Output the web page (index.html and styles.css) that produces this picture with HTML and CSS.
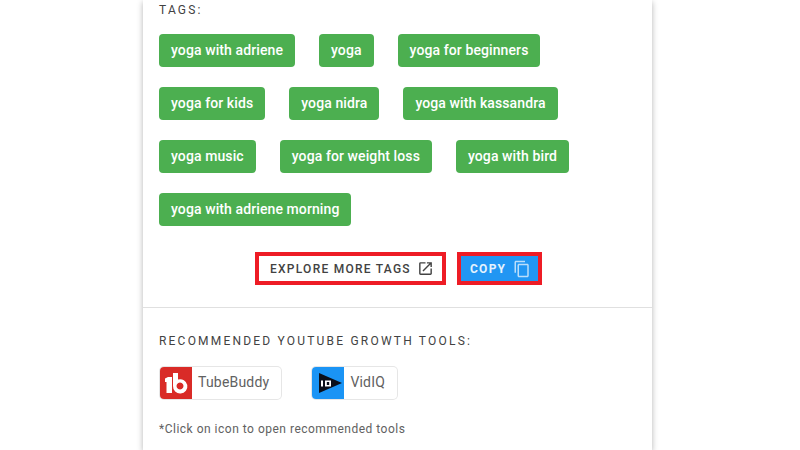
FILE: index.html
```html
<!DOCTYPE html>
<html lang="en">
<head>
<meta charset="utf-8">
<title>Tags</title>
<link rel="stylesheet" href="styles.css">
</head>
<body>
<main class="card">
  <section class="tags-section">
    <h2 class="label label-tags">TAGS:</h2>
    <div class="tags">
      <span class="tag">yoga with adriene</span>
      <span class="tag">yoga</span>
      <span class="tag">yoga for beginners</span>
      <span class="tag">yoga for kids</span>
      <span class="tag">yoga nidra</span>
      <span class="tag">yoga with kassandra</span>
      <span class="tag">yoga music</span>
      <span class="tag">yoga for weight loss</span>
      <span class="tag">yoga with bird</span>
      <span class="tag">yoga with adriene morning</span>
    </div>
    <div class="actions">
      <a class="btn btn-explore"><span class="btn-text">EXPLORE MORE TAGS</span>
        <svg class="btn-icon" viewBox="0 0 24 24" width="17" height="17"><path fill="#424242" d="M19 19H5V5h7V3H5a2 2 0 0 0-2 2v14a2 2 0 0 0 2 2h14c1.100 0 2-.9 2-2v-7h-2v7zM14 3v2h3.590l-9.830 9.830 1.410 1.410L19 6.410V10h2V3h-7z"/></svg>
      </a>
      <a class="btn btn-copy"><span class="btn-text">COPY</span>
        <svg class="btn-icon" viewBox="0 0 24 24" width="18" height="18"><path fill="#bbdefb" d="M16 1H4c-1.100 0-2 .9-2 2v14h2V3h12V1zm3 4H8c-1.100 0-2 .9-2 2v14c0 1.100.9 2 2 2h11c1.100 0 2-.9 2-2V7c0-1.100-.9-2-2-2zm0 16H8V7h11v14z"/></svg>
      </a>
    </div>
  </section>
  <section class="tools-section">
    <h2 class="label">RECOMMENDED YOUTUBE GROWTH TOOLS:</h2>
    <div class="tools">
      <a class="tool">
        <span class="tool-logo logo-tb">
          <svg viewBox="0 0 32 32" width="32" height="32">
            <path fill="#fff" d="M5 11.500l3-1.500h4V26H6.500V15H5z"/>
            <path fill="#fff" fill-rule="evenodd" d="M13 6h5v6.500A7.200 7.200 0 1 1 13 19zM20 15.500a3.500 3.500 0 1 0 .01 0z"/>
          </svg>
        </span>
        <span class="tool-name">TubeBuddy</span>
      </a>
      <a class="tool">
        <span class="tool-logo logo-iq">
          <svg viewBox="0 0 32 32" width="32" height="32">
            <path fill="#0b0f1a" d="M7 6l23 10L7 26z"/>
            <path fill="#fff" fill-rule="evenodd" d="M9 13.500h2v6H9zM13 13.500h6v6h-6zM14.800 15v3h2.400v-3z"/>
          </svg>
        </span>
        <span class="tool-name">VidIQ</span>
      </a>
    </div>
    <p class="note">*Click on icon to open recommended tools</p>
  </section>
</main>
</body>
</html>
```
FILE: styles.css
```css
html, body {
  margin: 0;
  height: 450px;
  overflow: hidden;
  background: #fff;
}
body {
  display: flex;
  padding-left: 143px;
  font-family: Roboto, sans-serif;
}
.card {
  width: 509px;
  height: 450px;
  background: #fff;
  box-shadow: 0 2px 6px rgba(0, 0, 0, .3);
  flex: none;
}
.tags-section {
  padding: 3px 16px 22px;
  border-bottom: 1px solid #e0e0e0;
}
.label {
  margin: 0;
  font-size: 12px;
  line-height: 14px;
  font-weight: 400;
  letter-spacing: 2.2px;
  color: #424242;
}
.tags {
  display: flex;
  flex-wrap: wrap;
  gap: 20px 24px;
  margin-top: 17px;
}
.tag {
  height: 33px;
  line-height: 33px;
  padding: 0 12px;
  border-radius: 4px;
  background: #4caf50;
  color: #fff;
  font-size: 14px;
  font-weight: 500;
  letter-spacing: .1px;
}
.actions {
  display: flex;
  justify-content: flex-end;
  gap: 11px;
  margin-top: 26px;
  padding-right: 94px;
}
.btn {
  box-sizing: border-box;
  height: 33px;
  display: flex;
  align-items: center;
  justify-content: space-between;
  border: 4px solid #ee1c25;
  font-size: 12px;
  font-weight: 500;
  letter-spacing: 1.250px;
  white-space: nowrap;
}
.btn-explore {
  width: 191px;
  padding: 0 8px 0 11px;
  color: #424242;
  background: #fff;
}
.btn-copy {
  width: 85px;
  padding: 0 7px 0 9px;
  color: #e3f2fd;
  background: #2196f3;
  font-weight: 700;
}
.tools-section {
  padding: 26px 16px 0;
}
.tools {
  display: flex;
  gap: 31px;
  margin: 19px 0 0 1px;
}
.tool {
  box-sizing: border-box;
  height: 32px;
  display: flex;
  align-items: center;
  border-radius: 4px;
  box-shadow: 0 0 0 1px #e6e6e6;
  background: #fff;
}
.tool-logo {
  width: 32px;
  height: 32px;
  display: flex;
  align-items: center;
  justify-content: center;
  border-radius: 4px 0 0 4px;
}
.logo-tb { background: #d92b27; }
.logo-iq { background: #1a94f5; }
.tool-name {
  padding: 0 12px 2px 6px;
  font-size: 14px;
  letter-spacing: .2px;
  color: #616161;
}
.note {
  margin: 23px 0 0;
  font-size: 12px;
  line-height: 14px;
  letter-spacing: .5px;
  color: #616161;
}
```
